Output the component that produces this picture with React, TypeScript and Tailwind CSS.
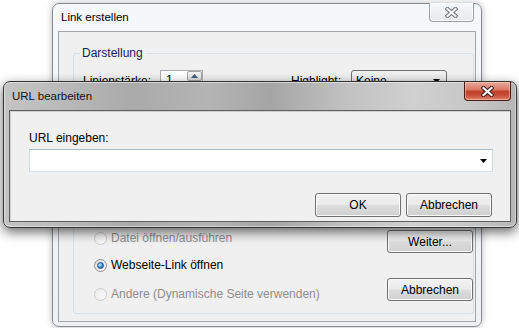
import React from "react";

const CloseX = ({ active }: { active: boolean }) => (
  <svg width="13" height="11" viewBox="0 0 13 11">
    <path
      d="M2.5 2 L10.5 9 M10.5 2 L2.5 9"
      stroke={active ? "#3b1a14" : "#6d7278"}
      strokeWidth="4.2"
      strokeLinecap="square"
      fill="none"
    />
    <path
      d="M2.5 2 L10.5 9 M10.5 2 L2.5 9"
      stroke={active ? "#ffffff" : "#f4f6f8"}
      strokeWidth="2.2"
      strokeLinecap="square"
      fill="none"
    />
  </svg>
);

const WinButton = ({ children, className = "" }: { children: React.ReactNode; className?: string }) => (
  <div
    className={
      "w-[86px] h-[23px] rounded-[3px] border border-[#707070] bg-[linear-gradient(to_bottom,#f2f2f2_0%,#ebebeb_48%,#dddddd_52%,#cfcfcf_100%)] shadow-[inset_0_0_0_1px_#fbfbfb] flex items-center justify-center text-[12px] leading-[14px] text-black " +
      className
    }
  >
    {children}
  </div>
);

const Radio = ({ checked, disabled, label }: { checked?: boolean; disabled?: boolean; label: string }) => (
  <div className="flex items-center h-[16px]">
    {checked ? (
      <span className="w-[13px] h-[13px] rounded-full border border-[#8e8f8f] bg-[linear-gradient(135deg,#dcdcdc,#ffffff)] flex items-center justify-center">
        <span className="w-[7px] h-[7px] rounded-full border border-[#1d4f86] bg-[radial-gradient(circle_at_35%_35%,#c4ecff,#3b93dc_55%,#154a8a)]" />
      </span>
    ) : (
      <span className="w-[13px] h-[13px] rounded-full border border-[#c9cacb] bg-[linear-gradient(135deg,#ececec,#fafafa)]" />
    )}
    <span className={"ml-[4px] text-[12px] leading-[14px] " + (disabled ? "text-[#8d8d8d]" : "text-black")}>
      {label}
    </span>
  </div>
);

const BackWindow = () => (
  <div className="absolute left-[52px] top-[3px] w-[430px] h-[324px] rounded-[7px] border border-[#878b91] bg-[linear-gradient(to_bottom,#f6f7f9,#eef0f2)] shadow-[0_0_7px_rgba(0,0,0,0.28)] flex flex-col px-[5px] pb-[4px]">
    <div className="h-[27px] flex items-start justify-between">
      <span className="pl-[3px] pt-[6px] text-[11.5px] leading-[14px] text-black">Link erstellen</span>
      <div className="mr-[2px] -mt-[1px] w-[45px] h-[19px] rounded-b-[4px] border border-t-0 border-[#9aa0a7] bg-[linear-gradient(to_bottom,#f6f7f8,#e7e9ec)] shadow-[inset_0_0_0_1px_rgba(255,255,255,0.7)] flex items-center justify-center">
        <CloseX active={false} />
      </div>
    </div>
    <div className="flex-1 border border-[#a3a6aa] bg-[#f0f0f0] flex flex-col">
      <fieldset className="ml-[14px] mr-[1px] mt-[14px] border border-[#d5dfe5] rounded-[3px] pb-[10px]">
        <legend className="ml-[6px] px-[2px] text-[12px] leading-[14px] text-[#14205a]">Darstellung</legend>
        <div className="mt-[10px] pl-[9px] flex items-center h-[21px]">
          <span className="w-[77px] text-[12px] leading-[14px] text-black">Linienstärke:</span>
          <div className="w-[43px] h-[21px] border border-[#abadb3] bg-white flex">
            <span className="flex-1 pl-[5px] text-[12px] leading-[19px] text-black">1</span>
            <div className="w-[15px] flex flex-col">
              <div className="h-[10px] border border-[#a6a6a6] rounded-[2px] bg-[linear-gradient(to_bottom,#f4f4f4,#dcdcdc)] flex items-center justify-center">
                <svg width="7" height="4" viewBox="0 0 7 4">
                  <path d="M0 4 L3.5 0 L7 4 Z" fill="#3c5a82" />
                </svg>
              </div>
              <div className="h-[9px] border border-[#a6a6a6] rounded-[2px] bg-[linear-gradient(to_bottom,#f4f4f4,#dcdcdc)]" />
            </div>
          </div>
          <span className="ml-[88px] w-[60px] text-[12px] leading-[14px] text-black">Highlight:</span>
          <div className="w-[96px] h-[21px] rounded-[3px] border border-[#707070] bg-[linear-gradient(to_bottom,#f2f2f2_0%,#ebebeb_48%,#dddddd_52%,#cfcfcf_100%)] flex items-center pl-[4px] pr-[6px]">
            <span className="flex-1 text-[12px] leading-[14px] text-black">Keine</span>
            <svg width="7" height="4" viewBox="0 0 7 4">
              <path d="M0 0 L7 0 L3.5 4 Z" fill="#000" />
            </svg>
          </div>
        </div>
        <div className="mt-[7px] pl-[9px] flex items-center h-[21px]">
          <span className="w-[77px] text-[12px] leading-[14px] text-black">Linienart:</span>
          <div className="w-[100px] h-[21px] border border-[#abadb3] bg-white" />
          <span className="ml-[31px] w-[60px] text-[12px] leading-[14px] text-black">Farbe:</span>
          <div className="w-[40px] h-[21px] border border-[#707070] bg-black" />
        </div>
      </fieldset>
      <fieldset className="mt-auto mb-[7px] ml-[14px] mr-[1px] border border-[#d5dfe5] rounded-[3px]">
        <legend className="ml-[6px] px-[2px] text-[12px] leading-[14px] text-[#14205a]">Aktion</legend>
        <div className="flex justify-between items-end pl-[20px] pb-[11px]">
          <div className="flex flex-col">
            <Radio disabled label="Gehe zu einer Seitenansicht" />
            <div className="mt-[11px]">
              <Radio disabled label="Datei öffnen/ausführen" />
            </div>
            <div className="mt-[11px]">
              <Radio checked label="Webseite-Link öffnen" />
            </div>
            <div className="mt-[13px]">
              <Radio disabled label="Andere (Dynamische Seite verwenden)" />
            </div>
          </div>
          <div className="flex flex-col gap-[25px] mb-[1px]">
            <WinButton>Weiter...</WinButton>
            <WinButton>Abbrechen</WinButton>
          </div>
        </div>
      </fieldset>
    </div>
  </div>
);

const FrontDialog = () => (
  <div className="absolute left-[3px] top-[81px] w-[514px] h-[147px] rounded-[7px] border border-[#343434] bg-[linear-gradient(90deg,#c4c4c4_0%,#bdbdbd_8%,#aaaaaa_25%,#b4b4b4_40%,#a5a5a5_52%,#c0c0c0_66%,#d0d0d0_80%,#c6c6c6_92%,#b6b6b6_100%)] shadow-[0_4px_12px_rgba(0,0,0,0.6),inset_0_0_0_1px_rgba(255,255,255,0.45)] flex flex-col px-[5px] pb-[5px]">
    <div className="h-[28px] flex items-start justify-between">
      <span className="pl-[3px] pt-[7px] text-[11.5px] leading-[14px] text-[#1a1010]">URL bearbeiten</span>
      <div className="w-[47px] h-[19px] rounded-b-[4px] border border-t-0 border-[#4a1c14] bg-[linear-gradient(to_bottom,#e9a999_0%,#d97a68_42%,#c4412d_52%,#c64a35_72%,#e0866c_100%)] shadow-[inset_0_0_0_1px_rgba(255,220,210,0.45)] flex items-center justify-center">
        <CloseX active />
      </div>
    </div>
    <div className="flex-1 border border-[#5e5e5e] bg-[#f0f0f0] shadow-[inset_1px_1px_0_#d0d0d0] flex flex-col">
      <span className="mt-[20px] ml-[19px] text-[12px] leading-[14px] text-black">URL eingeben:</span>
      <div className="mt-[4px] ml-[19px] w-[464px] h-[23px] border border-[#abb9c8] border-l-[#d2dce6] border-r-[#d2dce6] border-b-[#d8e1ea] bg-white flex items-center justify-end pr-[5px]">
        <svg width="7" height="4" viewBox="0 0 7 4">
          <path d="M0 0 L7 0 L3.5 4 Z" fill="#000" />
        </svg>
      </div>
      <div className="mt-[21px] flex justify-end gap-[5px] pr-[18px]">
        <WinButton className="h-[24px]">OK</WinButton>
        <WinButton className="h-[24px]">Abbrechen</WinButton>
      </div>
    </div>
  </div>
);

export default function App() {
  return (
    <div className="relative w-[519px] h-[328px] bg-white overflow-hidden font-['Liberation_Sans',Arial,sans-serif]">
      <BackWindow />
      <FrontDialog />
    </div>
  );
}
